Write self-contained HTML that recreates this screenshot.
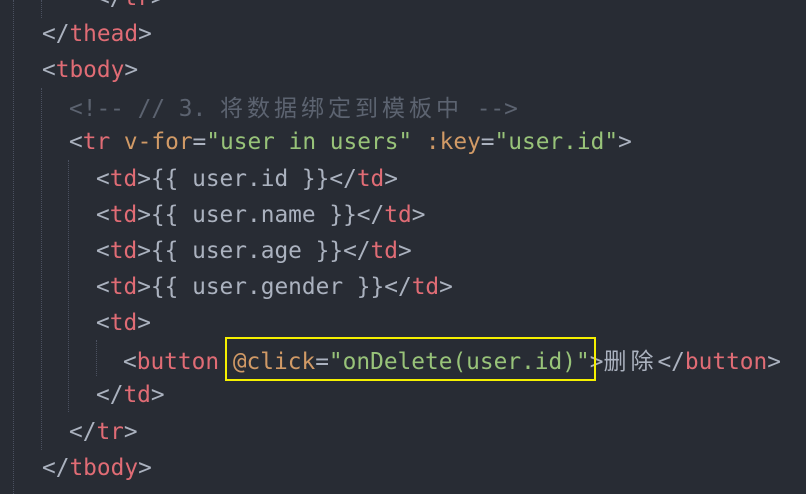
<!DOCTYPE html>
<html><head><meta charset="utf-8"><style>
html,body{margin:0;padding:0;background:#282c34;width:806px;height:494px;overflow:hidden}
.l{position:absolute;left:0;height:36px;line-height:36px;white-space:pre;font-family:"DejaVu Sans Mono","Liberation Mono","Noto Sans CJK SC",monospace;font-size:22.8px;color:#abb2bf}
.t{color:#e06c75}.p{color:#abb2bf}.a{color:#d19a66}.s{color:#98c379}.c{color:#5c6370}
.z{font-family:"Noto Sans CJK SC",sans-serif;display:inline-block;width:27px;text-align:left;font-size:23px}
.g{position:absolute;width:0;border-left:1px dotted #4b5160}
.box{position:absolute;left:225px;top:337px;width:367px;height:40px;border:2px solid #f5f000}
</style></head><body>
<div class="g" style="left:13px;top:0;height:494px"></div>
<div class="g" style="left:41px;top:0;height:18px"></div>
<div class="g" style="left:41px;top:88px;height:362px"></div>
<div class="g" style="left:68px;top:160px;height:252px"></div>
<div class="g" style="left:96px;top:340px;height:36px"></div>
<div class="l" style="top:-20px;left:96px"><span class="p">&lt;/</span><span class="t">tr</span><span class="p">&gt;</span></div>
<div class="l" style="top:16px;left:42px"><span class="p">&lt;/</span><span class="t">thead</span><span class="p">&gt;</span></div>
<div class="l" style="top:52px;left:42px"><span class="p">&lt;</span><span class="t">tbody</span><span class="p">&gt;</span></div>
<div class="l c" style="top:88px;left:69px">&lt;!-- // 3. <span class="z">将</span><span class="z">数</span><span class="z">据</span><span class="z">绑</span><span class="z">定</span><span class="z">到</span><span class="z">模</span><span class="z">板</span><span class="z">中</span> --&gt;</div>
<div class="l" style="top:124px;left:69px"><span class="p">&lt;</span><span class="t">tr</span> <span class="a">v-for</span><span class="p">=</span><span class="s">"user in users"</span> <span class="a">:key</span><span class="p">=</span><span class="s">"user.id"</span><span class="p">&gt;</span></div>
<div class="l" style="top:161px;left:96px"><span class="p">&lt;</span><span class="t">td</span><span class="p">&gt;</span>{{ user.id }}<span class="p">&lt;/</span><span class="t">td</span><span class="p">&gt;</span></div>
<div class="l" style="top:197px;left:96px"><span class="p">&lt;</span><span class="t">td</span><span class="p">&gt;</span>{{ user.name }}<span class="p">&lt;/</span><span class="t">td</span><span class="p">&gt;</span></div>
<div class="l" style="top:233px;left:96px"><span class="p">&lt;</span><span class="t">td</span><span class="p">&gt;</span>{{ user.age }}<span class="p">&lt;/</span><span class="t">td</span><span class="p">&gt;</span></div>
<div class="l" style="top:269px;left:96px"><span class="p">&lt;</span><span class="t">td</span><span class="p">&gt;</span>{{ user.gender }}<span class="p">&lt;/</span><span class="t">td</span><span class="p">&gt;</span></div>
<div class="l" style="top:305px;left:96px"><span class="p">&lt;</span><span class="t">td</span><span class="p">&gt;</span></div>
<div class="l" style="top:341px;left:123px"><span class="p">&lt;</span><span class="t">button</span> <span class="a">@click</span><span class="p">=</span><span class="s">"onDelete(user.id)"</span><span class="p">&gt;</span><span class="z">删</span><span class="z">除</span><span class="p">&lt;/</span><span class="t">button</span><span class="p">&gt;</span></div>
<div class="l" style="top:377px;left:96px"><span class="p">&lt;/</span><span class="t">td</span><span class="p">&gt;</span></div>
<div class="l" style="top:414px;left:69px"><span class="p">&lt;/</span><span class="t">tr</span><span class="p">&gt;</span></div>
<div class="l" style="top:450px;left:42px"><span class="p">&lt;/</span><span class="t">tbody</span><span class="p">&gt;</span></div>
<div class="box"></div>
</body></html>
